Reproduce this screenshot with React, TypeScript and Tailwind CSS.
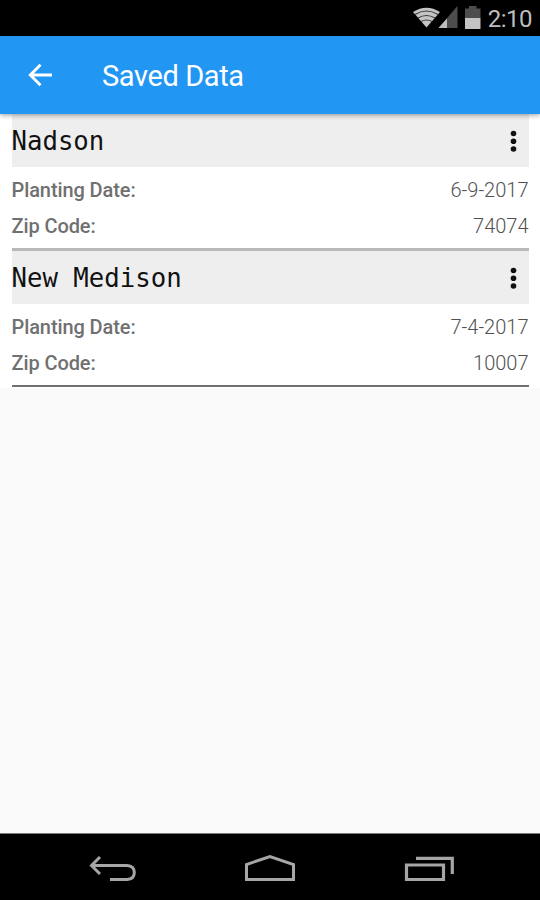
import clsx from "clsx";

const savedItems = [
  { id: 1, name: "Nadson", plantingDate: "6-9-2017", zipCode: "74074" },
  { id: 2, name: "New Medison", plantingDate: "7-4-2017", zipCode: "10007" },
];

function StatusBar() {
  return (
    <div className="flex h-9 shrink-0 items-center justify-end bg-black pr-2 text-[#bdbdbd]">
      <svg width="68" height="24" viewBox="0 0 68 24" className="mr-[7px] shrink-0">
        {/* wifi */}
        <path d="M0 6Q13.5 -2.5 27 6L13.5 21.5Z" fill="#c4c4c4" />
        <path
          d="M2 8.5Q13.5 1.5 25 8.5M5 12Q13.5 7 22 12M8 15.5Q13.5 12.5 19 15.5"
          fill="none"
          stroke="#3a3a3a"
          strokeWidth="1.2"
        />
        {/* signal */}
        <path d="M25.5 22L44.5 0V22Z" fill="#4d4d4d" />
        <path d="M25.5 22L34 12.5V22Z" fill="#bdbdbd" />
        {/* battery */}
        <path d="M52 2.5H56V0H63.5V2.5H67.5V12H52Z" fill="#4d4d4d" />
        <path d="M52 12H67.5V23H52Z" fill="#c4c4c4" />
      </svg>
      <span className="pt-px text-[24px] leading-9 tracking-[-0.5px]">2:10</span>
    </div>
  );
}

function Toolbar() {
  return (
    <header className="relative z-10 flex h-[78px] shrink-0 items-center bg-[#2196f3] text-white shadow-[0_1px_5px_rgba(0,0,0,0.4)]">
      <button className="ml-7 mr-[50px] h-6 w-6">
        <svg width="24" height="24" viewBox="0 0 24 24" fill="none">
          <path d="M24 12H2M12.5 1.8L2.3 12L12.5 22.2" stroke="currentColor" strokeWidth="2.9" />
        </svg>
      </button>
      <h1 className="pt-[4px] text-[29px] tracking-[-0.4px]">Saved Data</h1>
    </header>
  );
}

function DataRow({ label, value }: { label: string; value: string }) {
  return (
    <div className="flex h-[35.5px] items-center justify-between text-[20px]">
      <span className="font-medium tracking-[-0.1px] text-[#707070]">{label}</span>
      <span className="font-light text-[#505050]">{value}</span>
    </div>
  );
}

function NavBar() {
  return (
    <nav className="flex h-[67px] shrink-0 items-center border-t border-[#777] bg-black pl-[88px] pt-1">
      <svg width="48" height="30" viewBox="0 0 48 30" fill="none" stroke="#a6a6a6" strokeWidth="3">
        <path d="M12 3L3.5 11.5L12 20M3.5 11.5H39Q46.3 12 46.3 18.5T39 25.5H22" />
      </svg>
      <svg width="54" height="30" viewBox="0 0 54 30" fill="none" stroke="#a6a6a6" strokeWidth="3" className="ml-[107px]">
        <path d="M3.5 25.5V10.5L27 2.5L50.5 10.5V25.5Z" />
      </svg>
      <svg width="52" height="30" viewBox="0 0 52 30" fill="none" stroke="#a6a6a6" strokeWidth="3.2" className="ml-[106px]">
        <path d="M3.5 11H40.5V25.5H3.5ZM13 4.3H49.3V20" />
      </svg>
    </nav>
  );
}

export default function App() {
  return (
    <div className="flex h-[900px] w-[540px] flex-col overflow-hidden bg-[#fafafa] font-['Roboto',sans-serif]">
      <StatusBar />
      <Toolbar />

      {/* Saved list */}
      <main className="flex-1">
        <div className="bg-white px-[11.5px] pb-px">
          {savedItems.map((item, i) => (
            <section
              key={item.id}
              className={clsx(
                i === savedItems.length - 1
                  ? "h-[136px] border-b-2 border-[#707070]"
                  : "h-[137px] border-b-3 border-[#b9b9b9]"
              )}
            >
              <div className="flex h-[53px] items-center justify-between bg-[#eeeeee] pr-[12px]">
                <h2 className="font-['DejaVu_Sans_Mono',monospace] text-[25.7px] leading-9 text-[#111]">
                  {item.name}
                </h2>
                <svg width="7" height="24" viewBox="0 0 7 24" fill="#111">
                  <circle cx="3.5" cy="4.5" r="2.8" />
                  <circle cx="3.5" cy="12.3" r="2.8" />
                  <circle cx="3.5" cy="20" r="2.8" />
                </svg>
              </div>
              <div className="pt-[5.5px]">
                <DataRow label="Planting Date:" value={item.plantingDate} />
                <DataRow label="Zip Code:" value={item.zipCode} />
              </div>
            </section>
          ))}
        </div>
      </main>

      <NavBar />
    </div>
  );
}
